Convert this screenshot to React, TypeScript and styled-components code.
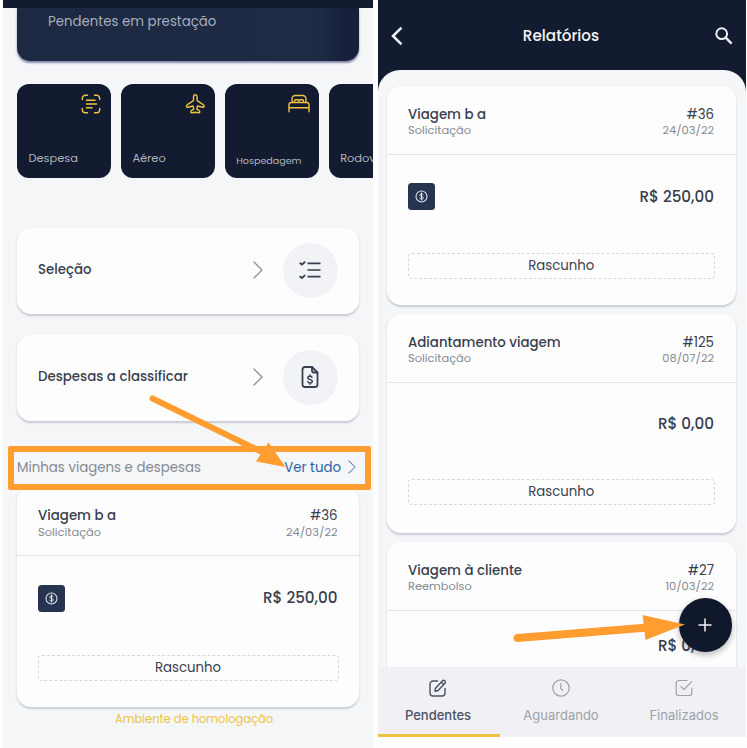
import React from "react";
import styled, { createGlobalStyle, css } from "styled-components";

const navy = "#121b2f";
const ink = "#393f4e";
const muted = "#858a94";
const surface = "#f4f6f8";
const gold = "#efc33f";
const orange = "#ff9d30";

const GlobalStyle = createGlobalStyle`
  * { box-sizing: border-box; }
  body {
    margin: 0;
    background: #fefefe;
    font-family: Poppins, Inter, "Open Sans", sans-serif;
    color: ${ink};
  }
`;

const Board = styled.main`
  position: relative;
  width: 747px;
  height: 748px;
  overflow: hidden;
  display: flex;
  align-items: flex-start;
  gap: 5px;
  padding-left: 3px;
`;

/* ---------- shared ---------- */

const cardSurface = css`
  background: #fdfdfd;
  border-radius: 14px;
  box-shadow: 0 1.5px 2px rgba(60, 70, 95, 0.24);
`;

const TripCard = styled.article`
  ${cardSurface}
  height: 219.5px;
  flex: none;
`;

const TripHeader = styled.header`
  height: 69px;
  padding: 19px 21.5px 0 21px;
  display: flex;
  justify-content: space-between;
  border-bottom: 1px solid #e2e4e8;
`;

const TripColumn = styled.div<{ $end?: boolean }>`
  display: flex;
  flex-direction: column;
  align-items: ${(p) => (p.$end ? "flex-end" : "flex-start")};
`;

const TripTitle = styled.strong<{ $light?: boolean }>`
  font-size: 13.35px;
  font-weight: ${(p) => (p.$light ? 400 : 500)};
  line-height: 20px;
  white-space: nowrap;
`;

const TripSub = styled.span`
  font-size: 11.4px;
  line-height: 14px;
  margin-top: -1.5px;
  color: ${muted};
`;

const TripValue = styled.div<{ $height: number }>`
  height: ${(p) => p.$height}px;
  padding: 0 21.5px 0 20.5px;
  display: flex;
  align-items: center;
`;

const Amount = styled.span`
  margin-left: auto;
  font-size: 15.2px;
  font-weight: 500;
  line-height: 22px;
`;

const MoneyTag = styled.span`
  width: 27px;
  height: 27px;
  border-radius: 3.5px;
  background: #263450;
  display: grid;
  place-items: center;
`;

const StatusBox = styled.div`
  height: 26px;
  margin: 14.5px 20.5px 0;
  border: 1px dashed #d5d8dc;
  border-radius: 4px;
  font-size: 13.3px;
  line-height: 24px;
  text-align: center;
`;

/* ---------- home screen ---------- */

const Home = styled.section`
  width: 370px;
  height: 748px;
  flex: none;
  background: ${surface};
  overflow: hidden;
`;

const HomeBar = styled.div`
  height: 7.5px;
  background: ${navy};
`;

const HomeContent = styled.div`
  padding: 0 14px;
`;

const Hero = styled.div`
  height: 53.5px;
  padding: 3px 31px;
  border-radius: 0 0 13px 13px;
  background: linear-gradient(90deg, #1d2942 0%, #1f2b44 88%, #17213c 95%);
  box-shadow: 0 1.5px 2px rgba(62, 60, 130, 0.6);
  color: #a7adba;
  font-size: 13.35px;
  line-height: 21px;
`;

const Tiles = styled.div`
  display: flex;
  gap: 9.7px;
  margin: 23px -14px 0 0;
  overflow: hidden;
`;

const Tile = styled.div`
  flex: none;
  width: 94.2px;
  height: 94px;
  padding: 9px 9px 11.5px 11.5px;
  border-radius: 12px;
  background: ${navy};
  display: flex;
  flex-direction: column;
  justify-content: space-between;

  svg { align-self: flex-end; }
`;

const TileLabel = styled.span<{ $small?: boolean }>`
  color: #b0b5be;
  font-size: ${(p) => (p.$small ? 9.55 : 11.4)}px;
  line-height: ${(p) => (p.$small ? 13 : 18)}px;
`;

const Shortcut = styled.div<{ $first?: boolean }>`
  ${cardSurface}
  height: 85.5px;
  margin-top: ${(p) => (p.$first ? 50 : 21.5)}px;
  padding: 0 21.5px 1px 21px;
  display: flex;
  align-items: center;
  font-size: 13.35px;
  font-weight: 500;

  > svg { margin-left: auto; margin-right: 19.5px; }
`;

const Round = styled.span`
  width: 55px;
  height: 55px;
  border-radius: 50%;
  background: #f2f3f7;
  display: grid;
  place-items: center;
`;

const SectionHead = styled.div`
  height: 66.5px;
  padding-top: 36px;
  display: flex;
  align-items: flex-start;
  justify-content: space-between;
  font-size: 13.35px;
  line-height: 21px;
  color: ${muted};
`;

const SeeAll = styled.span`
  display: flex;
  align-items: center;
  gap: 7px;
  margin-right: 3px;
  color: #2c62a4;
`;

const Environment = styled.p`
  margin: 3px 0 0 12px;
  text-align: center;
  color: ${gold};
  font-size: 11.45px;
  line-height: 18px;
`;

/* ---------- reports screen ---------- */

const Reports = styled.section`
  position: relative;
  width: 368px;
  height: 737px;
  flex: none;
  background: ${navy};
  display: flex;
  flex-direction: column;
`;

const ReportsBar = styled.header`
  height: 70px;
  flex: none;
  padding: 1.5px 12px 0 12px;
  display: flex;
  align-items: center;
  justify-content: space-between;
`;

const ReportsTitle = styled.h1`
  margin: 0 0 0 4px;
  color: #f3f4f6;
  font-size: 15.2px;
  font-weight: 500;
`;

const Sheet = styled.div`
  height: 596.5px;
  flex: none;
  padding: 15.5px 10.5px 0 9px;
  border-radius: 22px 22px 0 0;
  background: ${surface};
  display: flex;
  flex-direction: column;
  gap: 8.5px;
  overflow: hidden;
`;

const Tabs = styled.nav`
  flex: 1;
  display: grid;
  grid-template-columns: 122px 1fr 122px;
  background: #f0f0f5;
`;

const Tab = styled.div<{ $active?: boolean }>`
  display: flex;
  flex-direction: column;
  align-items: center;
  padding: 12px 2px 0 0;
  gap: 10px;
  border-bottom: 3px solid ${(p) => (p.$active ? gold : "transparent")};
  color: ${(p) => (p.$active ? "#4b515e" : "#9fa1a9")};
  font-family: Inter, sans-serif;
  font-size: 13px;
  line-height: 16px;
  font-weight: ${(p) => (p.$active ? 500 : 400)};
`;

const AddButton = styled.button`
  position: absolute;
  left: 300.5px;
  top: 598px;
  width: 53.5px;
  height: 53.5px;
  padding: 0;
  border: 0;
  border-radius: 50%;
  background: #10182b;
  box-shadow: 0 3px 6px rgba(0, 0, 0, 0.28);
  display: grid;
  place-items: center;
`;

/* ---------- annotations over both screens ---------- */

const Highlight = styled.div`
  position: absolute;
  left: 8px;
  top: 445.5px;
  width: 363px;
  height: 44.5px;
  border: 6px solid ${orange};
  border-radius: 2px;
`;

const Arrows = styled.svg`
  position: absolute;
  inset: 0;
  pointer-events: none;
`;

/* ---------- icons ---------- */

const line = { fill: "none", strokeLinecap: "round", strokeLinejoin: "round" } as const;

const ScanIcon = () => (
  <svg width="22" height="22" viewBox="0 0 22 22" stroke={gold} strokeWidth="1.4" {...line}>
    <path d="M2.300 6.500V5.300a3 3 0 0 1 3-3h2.200M14.500 2.300h2.200a3 3 0 0 1 3 3v1.200M19.700 15.500v1.200a3 3 0 0 1-3 3h-2.200M7.500 19.700H5.300a3 3 0 0 1-3-3v-1.200" />
    <path d="M6.500 7.300h8.500M6.500 11h10M6.500 14.700h5.500" strokeWidth="1.5" />
  </svg>
);

const PlaneIcon = () => (
  <svg width="22" height="22" viewBox="-0.5 0 22 22" stroke={gold} strokeWidth="1.4" {...line}>
    <path d="M10.800 1.800c-1.200 0-1.800 1-1.800 2.200v3.600L2.900 11.600c-.8.600-1.200 1.300-.9 2.100.2.500.8.600 1.400.5L8.600 13l.6 3.200-2.400 1.500c-.8.600-.6 2.200.5 2.100l3.500-.5 3.500.5c1.100.1 1.300-1.500.5-2.100l-2.400-1.500.6-3.200 5.200 1.200c.6.100 1.200 0 1.400-.5.300-.8-.1-1.500-.9-2.100L12.600 7.600V4c0-1.200-.6-2.200-1.800-2.200z" />
  </svg>
);

const BedIcon = () => (
  <svg width="22" height="22" viewBox="0 0 22 22" stroke={gold} strokeWidth="1.4" {...line}>
    <path d="M1 18.700v-7c0-1.300.9-2.200 2.300-2.200h15.400c1.400 0 2.300.9 2.300 2.200v7M1 14.700h20M4 9.500V5.800A3.300 3.300 0 0 1 7.300 2.500h7.400A3.300 3.300 0 0 1 18 5.800v3.700" />
    <path d="M6.500 9V8c0-.8.500-1.200 1.200-1.200h2.100c.7 0 1.200.4 1.200 1.200v1M11 9V8c0-.8.500-1.200 1.200-1.200h2.100c.7 0 1.200.4 1.200 1.200v1" />
  </svg>
);

const Chevron = ({ w, h, color }: { w: number; h: number; color: string }) => (
  <svg width={w} height={h} viewBox="0 0 10 18" stroke={color} strokeWidth="1.3" preserveAspectRatio="none" {...line}>
    <path d="M1 1l8 8-8 8" />
  </svg>
);

const ChecklistIcon = () => (
  <svg width="22" height="20" viewBox="0 0 22 20" stroke={ink} {...line}>
    <path d="M8.500 3.300h13M8.500 10h13M8.500 16.700h13" strokeWidth="1.7" strokeLinecap="butt" />
    <path d="M1.300 3.300l1.600 1.300 2.700-2.400M1.300 16.700l1.600 1.300 2.700-2.400" strokeWidth="1.900" />
  </svg>
);

const InvoiceIcon = () => (
  <svg width="18" height="24" viewBox="0 0 18 24" stroke={ink} strokeWidth="1.8" {...line}>
    <path d="M11 2H4a2.500 2.500 0 0 0-2.500 2.500v15A2.500 2.500 0 0 0 4 22h10a2.500 2.500 0 0 0 2.500-2.500V7.500z" />
    <path d="M11 2v3.500a2 2 0 0 0 2 2h3.500" />
    <path d="M11 12.300c-.4-.7-1.100-1-2-1-1.200 0-2.100.6-2.100 1.600 0 2.300 4.400.9 4.400 3.300 0 1-1 1.700-2.200 1.700-1.100 0-1.900-.4-2.400-1.200M9 10v1.300M9 17.900v1.300" strokeWidth="1.5" />
  </svg>
);

const CoinIcon = () => (
  <svg width="13" height="13" viewBox="0 0 13 13" stroke="#dfe3ea" {...line}>
    <circle cx="6.500" cy="6.500" r="5.500" strokeWidth="1.100" />
    <path d="M8.300 4.800c-.3-.6-.9-.9-1.800-.9-1 0-1.800.4-1.800 1.200 0 1.900 3.700.8 3.700 2.700 0 .8-.8 1.300-1.900 1.300-.9 0-1.600-.3-2-1M6.500 2.900v7.200" strokeWidth="1" />
  </svg>
);

const BackIcon = () => (
  <svg width="14" height="20" viewBox="0 0 14 20" stroke="#f3f4f6" strokeWidth="2.500" fill="none">
    <path d="M11.500 1.700L3 10l8.500 8.300" />
  </svg>
);

const SearchIcon = () => (
  <svg width="20" height="20" viewBox="0 0 20 20" stroke="#eceef2" fill="none">
    <circle cx="7.700" cy="7.700" r="5.400" strokeWidth="2" />
    <path d="M11.700 11.700l5.900 5.900" strokeWidth="2.500" />
  </svg>
);

const EditIcon = () => (
  <svg width="18" height="18" viewBox="0 0 18 18" stroke="currentColor" strokeWidth="1.400" {...line}>
    <path d="M8.500 2H4a3 3 0 0 0-3 3v9a3 3 0 0 0 3 3h9a3 3 0 0 0 3-3V9.500" />
    <path d="M6 12.200l.5-3 6.800-7.300c.7-.7 1.700-.8 2.500-.1s.8 1.800.1 2.500L9.100 11.500zM12.200 3.100l2.500 2.400" />
  </svg>
);

const ClockIcon = () => (
  <svg width="18" height="18" viewBox="0 0 18 18" stroke="currentColor" strokeWidth="1.200" {...line}>
    <circle cx="9" cy="9" r="8.200" />
    <path d="M8.700 4.500v4.700l2 2.300" />
  </svg>
);

const DoneIcon = () => (
  <svg width="18" height="18" viewBox="0 0 18 18" stroke="currentColor" strokeWidth="1.200" {...line}>
    <path d="M12 1.500H4a2.800 2.800 0 0 0-2.800 2.800v9.400A2.800 2.800 0 0 0 4 16.500h10a2.800 2.800 0 0 0 2.800-2.800V9" />
    <path d="M6 7.500l3 3.200 7.500-8" />
  </svg>
);

const PlusIcon = () => (
  <svg width="14" height="14" viewBox="0 0 14 14" stroke="#f1f2f4" strokeWidth="1.500">
    <path d="M7 .5v13M.5 7h13" />
  </svg>
);

/* ---------- pieces ---------- */

type TripData = {
  title: string;
  kind: string;
  code: string;
  date: string;
  amount: string;
  money?: boolean;
  status?: string;
  valueHeight: number;
};

const Trip = ({ title, kind, code, date, amount, money, status, valueHeight }: TripData) => (
  <TripCard>
    <TripHeader>
      <TripColumn>
        <TripTitle>{title}</TripTitle>
        <TripSub>{kind}</TripSub>
      </TripColumn>
      <TripColumn $end>
        <TripTitle $light>{code}</TripTitle>
        <TripSub>{date}</TripSub>
      </TripColumn>
    </TripHeader>
    <TripValue $height={valueHeight}>
      {money && <MoneyTag><CoinIcon /></MoneyTag>}
      <Amount>{amount}</Amount>
    </TripValue>
    {status && <StatusBox>{status}</StatusBox>}
  </TripCard>
);

const trips: TripData[] = [
  { title: "Viagem b a", kind: "Solicitação", code: "#36", date: "24/03/22", amount: "R$ 250,00", money: true, status: "Rascunho", valueHeight: 84 },
  { title: "Adiantamento viagem", kind: "Solicitação", code: "#125", date: "08/07/22", amount: "R$ 0,00", status: "Rascunho", valueHeight: 82 },
  { title: "Viagem à cliente", kind: "Reembolso", code: "#27", date: "10/03/22", amount: "R$ 0,00", valueHeight: 71 },
];

export default function App() {
  return (
    <Board>
      <GlobalStyle />
      <Home>
        <HomeBar />
        <HomeContent>
          <Hero>Pendentes em prestação</Hero>
          <Tiles>
            <Tile><ScanIcon /><TileLabel>Despesa</TileLabel></Tile>
            <Tile><PlaneIcon /><TileLabel>Aéreo</TileLabel></Tile>
            <Tile><BedIcon /><TileLabel $small>Hospedagem</TileLabel></Tile>
            <Tile><span /><TileLabel>Rodoviário</TileLabel></Tile>
          </Tiles>
          <Shortcut $first>
            Seleção
            <Chevron w={10} h={18} color="#8d9199" />
            <Round><ChecklistIcon /></Round>
          </Shortcut>
          <Shortcut>
            Despesas a classificar
            <Chevron w={10} h={18} color="#8d9199" />
            <Round><InvoiceIcon /></Round>
          </Shortcut>
          <SectionHead>
            Minhas viagens e despesas
            <SeeAll>Ver tudo <Chevron w={8} h={14} color="#5c86bb" /></SeeAll>
          </SectionHead>
          <Trip {...trips[0]} />
          <Environment>Ambiente de homologação</Environment>
        </HomeContent>
      </Home>

      <Reports>
        <ReportsBar>
          <BackIcon />
          <ReportsTitle>Relatórios</ReportsTitle>
          <SearchIcon />
        </ReportsBar>
        <Sheet>
          {trips.map((t) => <Trip key={t.code} {...t} />)}
        </Sheet>
        <Tabs>
          <Tab $active><EditIcon />Pendentes</Tab>
          <Tab><ClockIcon />Aguardando</Tab>
          <Tab><DoneIcon />Finalizados</Tab>
        </Tabs>
        <AddButton aria-label="Adicionar"><PlusIcon /></AddButton>
      </Reports>

      <Highlight />
      <Arrows width="747" height="748" viewBox="0 0 747 748" fill={orange} stroke={orange}>
        <path d="M152.500 398.500L264 453" strokeWidth="6" strokeLinecap="round" />
        <path d="M268.500 442.500L285.500 467L256 461.500Z" stroke="none" />
        <path d="M517.500 638L648 627.500" strokeWidth="8" strokeLinecap="round" />
        <path d="M642.500 615L685 624.500L645.500 640Z" stroke="none" />
      </Arrows>
    </Board>
  );
}
